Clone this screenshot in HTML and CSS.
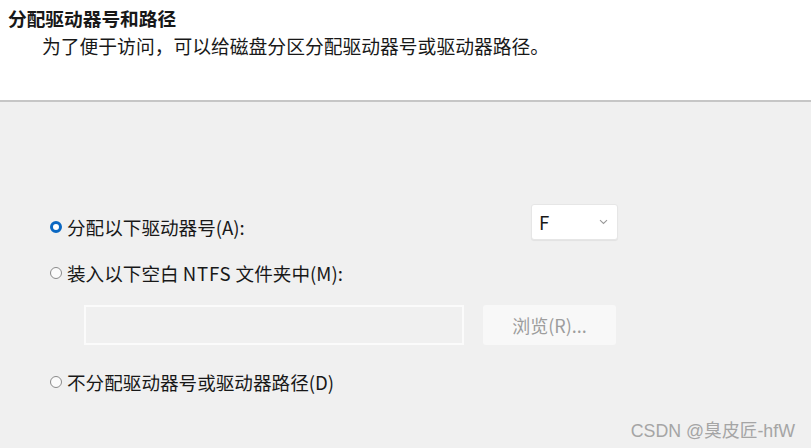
FILE: index.html
```html
<!DOCTYPE html>
<html lang="zh-CN">
<head>
<meta charset="utf-8">
<title>分配驱动器号和路径</title>
<link rel="stylesheet" href="styles.css">
</head>
<body>
<header class="header">
  <div class="title">分配驱动器号和路径</div>
  <div class="subtitle">为了便于访问，可以给磁盘分区分配驱动器号或驱动器路径。</div>
</header>
<main class="content">
  <div class="row row-letter">
    <label class="option">
      <span class="radio radio-on"></span>
      <span class="label-text">分配以下驱动器号(A):</span>
    </label>
    <div class="select">
      <span class="select-value">F</span>
      <svg class="chev" width="9" height="6" viewBox="0 0 9 6"><path d="M1 1.2 L4.5 4.5 L8 1.2" fill="none" stroke="#9a9a9a" stroke-width="1.1"/></svg>
    </div>
  </div>
  <label class="option row-mount">
    <span class="radio"></span>
    <span class="label-text">装入以下空白 <span class="latin">NTFS</span> 文件夹中(M):</span>
  </label>
  <div class="path-row">
    <div class="path-field"></div>
    <div class="browse">浏览(R)...</div>
  </div>
  <label class="option row-none">
    <span class="radio"></span>
    <span class="label-text">不分配驱动器号或驱动器路径(D)</span>
  </label>
</main>
<div class="watermark">CSDN @臭皮匠-hfW</div>
</body>
</html>
```
FILE: styles.css
```css
html {
  background: #f0f0f0;
}
body {
  margin: 0;
  min-height: 448px;
  position: relative;
  font-family: "Noto Sans CJK SC", "Noto Sans", sans-serif;
  color: #181818;
  overflow: hidden;
}
.header {
  background: #ffffff;
  height: 102px;
  box-sizing: border-box;
  padding: 4px 0 0 8px;
  border-bottom: 2px solid #c6c6c6;
}
.title {
  font-size: 18.7px;
  font-weight: bold;
  line-height: 28px;
}
.subtitle {
  font-size: 18.8px;
  line-height: 28px;
  margin-top: 0;
  padding-left: 34px;
}
.content {
  padding: 102px 0 0 50px;
  display: flex;
  flex-direction: column;
}
.row-letter {
  display: grid;
  grid-template-columns: 481px 87px;
  align-items: start;
  height: 36px;
}
.option {
  display: flex;
  align-items: center;
  font-size: 18.6px;
  line-height: 20px;
  height: 20px;
}
.latin {
  letter-spacing: 0.8px;
}
.row-letter .option {
  margin-top: 13px;
}
.radio {
  width: 12px;
  height: 12px;
  box-sizing: border-box;
  border-radius: 50%;
  border: 1px solid #8a8a8a;
  background: #fbfbfb;
  margin-right: 5px;
  flex: none;
}
.radio-on {
  border: 3px solid #0a67c2;
  background: #ffffff;
}
.select {
  height: 36px;
  box-sizing: border-box;
  background: #ffffff;
  border: 1px solid #e6e6e6;
  border-radius: 3px;
  box-shadow: 0 1px 1px rgba(0, 0, 0, 0.06);
  display: flex;
  align-items: center;
  justify-content: space-between;
  padding: 0 9px 0 7px;
  font-size: 18.6px;
}
.select-value {
  line-height: 20px;
}
.chev {
  display: block;
}
.row-mount {
  margin-top: 23px;
}
.path-row {
  display: flex;
  margin-top: 22px;
  padding-left: 34px;
  height: 40px;
}
.path-field {
  width: 380px;
  height: 40px;
  box-sizing: border-box;
  border: 2px solid #fbfbfb;
  background: #f0f0f0;
}
.browse {
  margin-left: 19px;
  width: 133px;
  height: 40px;
  background: #f8f8f8;
  border-radius: 3px;
  display: flex;
  align-items: center;
  justify-content: center;
  color: #9d9d9d;
  font-size: 18px;
}
.row-none {
  margin-top: 27px;
}
.watermark {
  position: absolute;
  right: 16px;
  bottom: 7px;
  font-family: "Liberation Sans", "Noto Sans CJK SC", sans-serif;
  font-size: 17.8px;
  line-height: 20px;
  color: #a5a5a5;
}
```
